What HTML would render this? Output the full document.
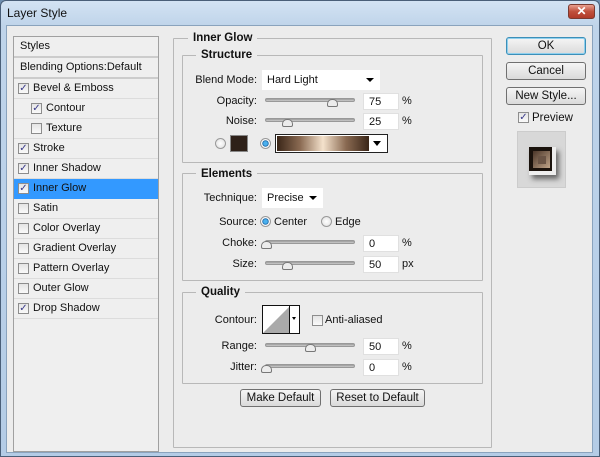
<!DOCTYPE html>
<html><head><style>
*{box-sizing:border-box;margin:0;padding:0}
body{width:600px;height:457px;overflow:hidden;background:#6f8fb0;font-family:"Liberation Sans",sans-serif;font-size:11px;color:#111;position:relative}
.a{position:absolute}
#win{left:0;top:0;width:600px;height:457px;border-radius:6px 6px 0 0;background:linear-gradient(#d3e3f3,#bfd4ea 25px,#b4cce6);border:1px solid #4a5f78}
#body{left:6px;top:25px;width:587px;height:428px;background:#ececec;border:1px solid #8aa3bd}
.t{position:absolute;white-space:nowrap;line-height:12px}
.r{text-align:right}
#list{left:13px;top:36px;width:146px;height:416px;background:#efefef;border:1px solid #a0a0a0}
.row{position:absolute;left:0;width:144px;height:20px;border-bottom:1px solid #dcdcdc;line-height:19px;padding-left:6px}
.cb{position:absolute;width:11px;height:11px;border:1px solid #8d8d8d;background:linear-gradient(#e4e4e4,#fafafa);font-size:10px;line-height:9px;text-align:center;color:#3a3a8a}
.box{position:absolute;border:1px solid #b8b8b8;border-radius:1px}
.lg{position:absolute;background:#ececec;font-weight:bold;padding:0 5px;font-size:11.5px;line-height:12px}
.inp{position:absolute;width:36px;height:17px;background:#fff;border:1px solid #e0e0e0;padding-left:5px;line-height:16px}
.trk{position:absolute;height:4px;width:90px;background:linear-gradient(#999,#ccc);border:1px solid #999;border-radius:2px}
.th{position:absolute;width:11px;height:8px;background:#ececec;border:1px solid #777;border-radius:5px 5px 2px 2px}
.btn{position:absolute;height:18px;border:1px solid #707070;border-radius:3px;background:linear-gradient(#f5f5f5,#dadada);text-align:center;line-height:16px;font-size:11.5px}
.sel{position:absolute;background:#fff;height:20px;line-height:20px;padding-left:5px}
.sel:after{content:"";position:absolute;right:6px;top:8px;border:4px solid transparent;border-top:4px solid #000;border-bottom:0}
.rad{position:absolute;width:11px;height:11px;border-radius:50%;border:1px solid #999;background:radial-gradient(#fff,#ddd)}
.rad.on{background:radial-gradient(#4ab0ee 30%,#1560a0 45%,#fff 55%,#ddd)}
</style></head><body>
<div id="win" class="a"></div>
<div class="t" style="left:7px;top:7px;font-size:12px">Layer Style</div>
<div class="a" style="left:568px;top:4px;width:27px;height:15px;border-radius:3px;border:1px solid #7a3a30;background:linear-gradient(#e8a090,#c0503c 50%,#b03a28);color:#fff;font-weight:bold;text-align:center;line-height:13px;font-size:12px">✕</div>
<div id="body" class="a"></div>

<div id="list" class="a">
<div class="row" style="top:0;height:21px;border-bottom:2px solid #ccc">Styles</div>
<div class="row" style="top:21px;height:21px;border-bottom:2px solid #ccc">Blending Options:Default</div>
<div class="row" style="top:42px"><span class="cb" style="left:4px;top:4px">✓</span><span style="margin-left:13px">Bevel &amp; Emboss</span></div>
<div class="row" style="top:62px"><span class="cb" style="left:17px;top:4px">✓</span><span style="margin-left:26px">Contour</span></div>
<div class="row" style="top:82px"><span class="cb" style="left:17px;top:4px"></span><span style="margin-left:26px">Texture</span></div>
<div class="row" style="top:102px"><span class="cb" style="left:4px;top:4px">✓</span><span style="margin-left:13px">Stroke</span></div>
<div class="row" style="top:122px"><span class="cb" style="left:4px;top:4px">✓</span><span style="margin-left:13px">Inner Shadow</span></div>
<div class="row" style="top:142px;background:#3399ff;border-color:#3399ff"><span class="cb" style="left:4px;top:4px">✓</span><span style="margin-left:13px">Inner Glow</span></div>
<div class="row" style="top:162px"><span class="cb" style="left:4px;top:4px"></span><span style="margin-left:13px">Satin</span></div>
<div class="row" style="top:182px"><span class="cb" style="left:4px;top:4px"></span><span style="margin-left:13px">Color Overlay</span></div>
<div class="row" style="top:202px"><span class="cb" style="left:4px;top:4px"></span><span style="margin-left:13px">Gradient Overlay</span></div>
<div class="row" style="top:222px"><span class="cb" style="left:4px;top:4px"></span><span style="margin-left:13px">Pattern Overlay</span></div>
<div class="row" style="top:242px"><span class="cb" style="left:4px;top:4px"></span><span style="margin-left:13px">Outer Glow</span></div>
<div class="row" style="top:262px"><span class="cb" style="left:4px;top:4px">✓</span><span style="margin-left:13px">Drop Shadow</span></div>
</div>

<div class="box" style="left:173px;top:38px;width:319px;height:410px"></div>
<div class="lg" style="left:188px;top:32px">Inner Glow</div>
<div class="box" style="left:182px;top:55px;width:301px;height:108px"></div>
<div class="lg" style="left:196px;top:49px">Structure</div>
<div class="t r" style="left:180px;width:77px;top:74px">Blend Mode:</div>
<div class="sel" style="left:262px;top:70px;width:118px">Hard Light</div>
<div class="t r" style="left:180px;width:77px;top:95px">Opacity:</div>
<div class="trk" style="left:265px;top:98px"></div><div class="th" style="left:327px;top:99px"></div>
<div class="inp" style="left:363px;top:93px">75</div><div class="t" style="left:402px;top:95px">%</div>
<div class="t r" style="left:180px;width:77px;top:115px">Noise:</div>
<div class="trk" style="left:265px;top:118px"></div><div class="th" style="left:282px;top:119px"></div>
<div class="inp" style="left:363px;top:113px">25</div><div class="t" style="left:402px;top:115px">%</div>
<div class="rad" style="left:215px;top:138px"></div>
<div class="a" style="left:230px;top:135px;width:18px;height:17px;background:#2e2119;border:1px solid #888"></div>
<div class="rad on" style="left:260px;top:138px"></div>
<div class="a" style="left:275px;top:134px;width:113px;height:19px;border:1px solid #222;background:#fff"></div>
<div class="a" style="left:277px;top:136px;width:92px;height:15px;background:linear-gradient(90deg,#3a2618,#8a6a52 25%,#f4e2cc 50%,#8a6a52 75%,#3a2618)"></div>
<div class="a" style="left:373px;top:141px;border:4px solid transparent;border-top:5px solid #000"></div>

<div class="box" style="left:182px;top:173px;width:301px;height:108px"></div>
<div class="lg" style="left:196px;top:168px">Elements</div>
<div class="t r" style="left:180px;width:77px;top:192px">Technique:</div>
<div class="sel" style="left:262px;top:188px;width:61px">Precise</div>
<div class="t r" style="left:180px;width:77px;top:216px">Source:</div>
<div class="rad on" style="left:260px;top:216px"></div><div class="t" style="left:274px;top:216px">Center</div>
<div class="rad" style="left:321px;top:216px"></div><div class="t" style="left:335px;top:216px">Edge</div>
<div class="t r" style="left:180px;width:77px;top:237px">Choke:</div>
<div class="trk" style="left:265px;top:240px"></div><div class="th" style="left:261px;top:241px"></div>
<div class="inp" style="left:363px;top:235px">0</div><div class="t" style="left:402px;top:237px">%</div>
<div class="t r" style="left:180px;width:77px;top:258px">Size:</div>
<div class="trk" style="left:265px;top:261px"></div><div class="th" style="left:282px;top:262px"></div>
<div class="inp" style="left:363px;top:256px">50</div><div class="t" style="left:402px;top:258px">px</div>

<div class="box" style="left:182px;top:292px;width:301px;height:92px"></div>
<div class="lg" style="left:196px;top:286px">Quality</div>
<div class="t r" style="left:180px;width:77px;top:314px">Contour:</div>
<div class="a" style="left:262px;top:305px;width:38px;height:29px;border:1px solid #111;background:#fff"></div>
<svg class="a" style="left:263px;top:306px" width="27" height="27"><polygon points="0,27 27,0 27,27" fill="#aaa"/></svg>
<div class="a" style="left:289px;top:306px;width:1px;height:27px;background:#111"></div>
<div class="a" style="left:292px;top:317px;border:2px solid transparent;border-top:3px solid #000"></div>
<div class="cb" style="left:312px;top:315px"></div><div class="t" style="left:325px;top:314px">Anti-aliased</div>
<div class="t r" style="left:180px;width:77px;top:340px">Range:</div>
<div class="trk" style="left:265px;top:343px"></div><div class="th" style="left:305px;top:344px"></div>
<div class="inp" style="left:363px;top:338px">50</div><div class="t" style="left:402px;top:340px">%</div>
<div class="t r" style="left:180px;width:77px;top:361px">Jitter:</div>
<div class="trk" style="left:265px;top:364px"></div><div class="th" style="left:261px;top:365px"></div>
<div class="inp" style="left:363px;top:359px">0</div><div class="t" style="left:402px;top:361px">%</div>
<div class="btn" style="left:240px;top:389px;width:81px">Make Default</div>
<div class="btn" style="left:330px;top:389px;width:95px">Reset to Default</div>

<div class="btn" style="left:506px;top:37px;width:80px;border-color:#3c8fb8;box-shadow:0 0 0 1px #8fd0ee inset">OK</div>
<div class="btn" style="left:506px;top:62px;width:80px">Cancel</div>
<div class="btn" style="left:506px;top:87px;width:80px">New Style...</div>
<div class="cb" style="left:518px;top:112px">✓</div><div class="t" style="left:532px;top:112px;font-size:11.5px">Preview</div>
<div class="a" style="left:517px;top:131px;width:49px;height:57px;background:#d8d8d8;border:1px solid #ccc"></div>
<div class="a" style="left:529px;top:147px;width:27px;height:28px;background:#eee;box-shadow:3px 4px 5px #666"></div>
<div class="a" style="left:529px;top:147px;width:23px;height:24px;background:#1a120c"></div>
<div class="a" style="left:533px;top:151px;width:17px;height:17px;background:linear-gradient(135deg,#4a3528,#c0a488)"></div>
<div class="a" style="left:538px;top:156px;width:8px;height:8px;background:#6a5445"></div>
</body></html>
